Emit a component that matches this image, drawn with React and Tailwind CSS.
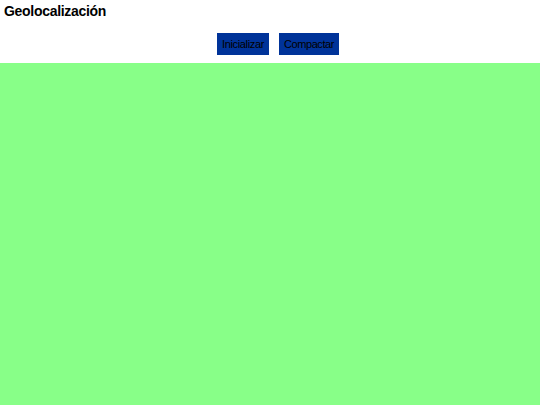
export default function App() {
  return (
    <div className="h-[405px] w-[540px] flex flex-col bg-white font-['Liberation_Sans',Arial,sans-serif]">
      <h1 className="pl-1 pt-[3px] text-[14px] leading-[16px] font-bold tracking-[-0.3px] text-black">Geolocalización</h1>
      <div className="flex justify-center gap-[10px] pl-4 pt-[14px]">
        <button className="h-[22px] w-[52px] bg-[#003399] pt-[1px] text-[11px] tracking-[-0.35px] text-black">Inicializar</button>
        <button className="h-[22px] w-[60px] bg-[#003399] pt-[1px] text-[11px] tracking-[-0.4px] text-black">Compactar</button>
      </div>
      <div className="mt-2 flex-1 bg-[#88ff88]"></div>
    </div>
  );
}
